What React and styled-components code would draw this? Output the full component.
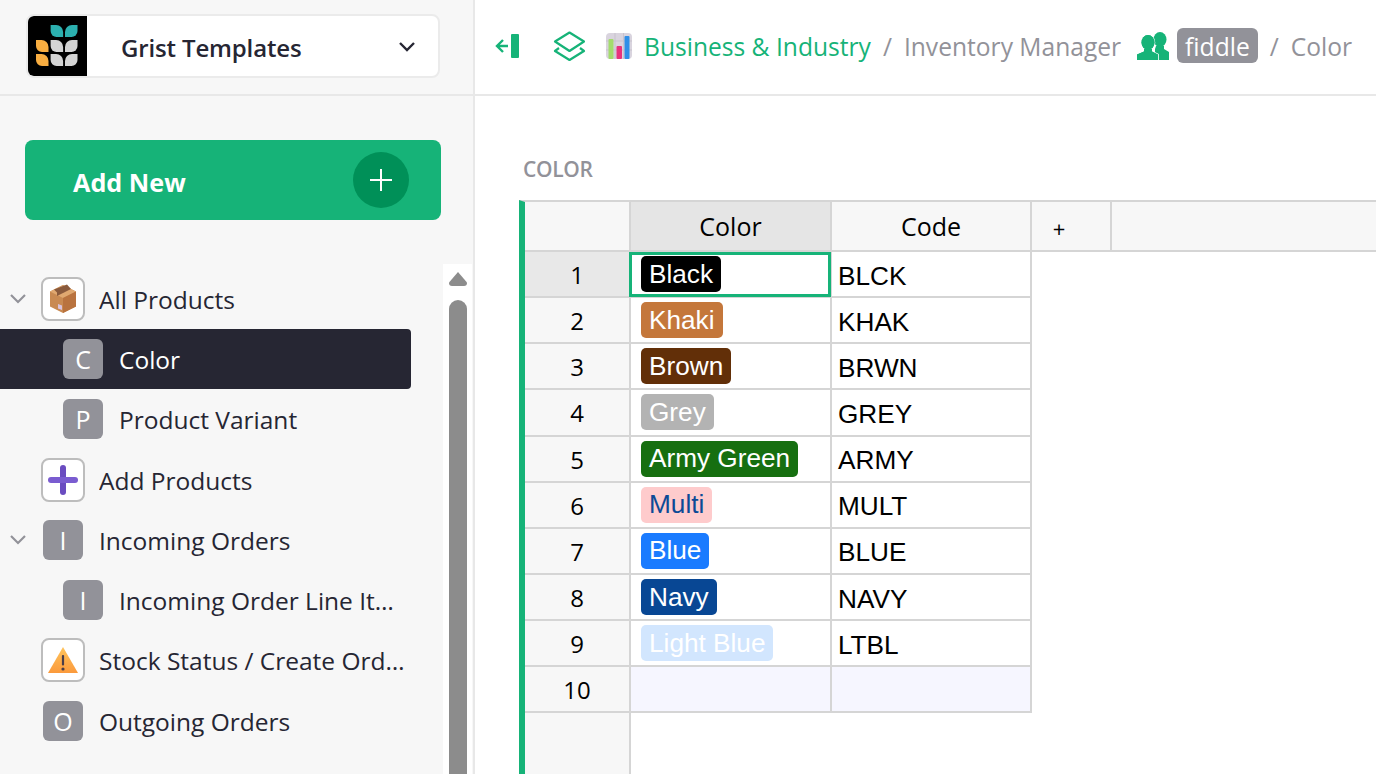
import React from 'react';
import styled, { createGlobalStyle } from 'styled-components';

const GlobalStyle = createGlobalStyle`
  html, body {
    margin: 0;
    padding: 0;
    background: #fff;
    font-family: "Open Sans", "Noto Sans", sans-serif;
  }
  * { box-sizing: border-box; }
`;

const green = '#16b378';

const pages = [
  { name: 'All Products', level: 0, open: true, icon: 'box' },
  { name: 'Color', level: 1, letter: 'C', active: true },
  { name: 'Product Variant', level: 1, letter: 'P' },
  { name: 'Add Products', level: 0, icon: 'plus' },
  { name: 'Incoming Orders', level: 0, open: true, letter: 'I' },
  { name: 'Incoming Order Line Items', level: 1, letter: 'I' },
  { name: 'Stock Status / Create Orders', level: 0, icon: 'warn' },
  { name: 'Outgoing Orders', level: 0, letter: 'O' },
];

const rows = [
  { label: 'Black', code: 'BLCK', bg: '#000000', fg: '#ffffff' },
  { label: 'Khaki', code: 'KHAK', bg: '#c4773b', fg: '#ffffff' },
  { label: 'Brown', code: 'BRWN', bg: '#622f08', fg: '#ffffff' },
  { label: 'Grey', code: 'GREY', bg: '#b3b3b3', fg: '#ffffff' },
  { label: 'Army Green', code: 'ARMY', bg: '#166f10', fg: '#ffffff' },
  { label: 'Multi', code: 'MULT', bg: '#fecbcc', fg: '#0c4a96' },
  { label: 'Blue', code: 'BLUE', bg: '#1a7bff', fg: '#ffffff' },
  { label: 'Navy', code: 'NAVY', bg: '#084794', fg: '#ffffff' },
  { label: 'Light Blue', code: 'LTBL', bg: '#d2e6fe', fg: '#ffffff' },
];

function Leaf({ x, y, color, flip }) {
  const d = flip
    ? `M${x + 12.5} ${y}V${y + 6}a6 6 0 0 1-6 6H${x}V${y + 7}a7 7 0 0 1 7-7z`
    : `M${x} ${y}H${x + 5.5}a7 7 0 0 1 7 7v5H${x + 6}a6 6 0 0 1-6-6z`;
  return <path d={d} fill={color} />;
}

function GristLogo() {
  return (
    <svg width="60" height="60" viewBox="0 0 60 60">
      <Leaf x={23.6} y={9} color="#2cb0af" />
      <Leaf x={38} y={9} color="#2cb0af" flip />
      <Leaf x={9} y={24} color="#f9ae41" />
      <Leaf x={23.6} y={24} color="#d4d4d4" />
      <Leaf x={38} y={24} color="#d4d4d4" flip />
      <Leaf x={9} y={38} color="#f9ae41" />
      <Leaf x={23.6} y={38} color="#d4d4d4" />
      <Leaf x={38} y={38} color="#d4d4d4" flip />
    </svg>
  );
}

function BoxIcon() {
  return (
    <svg width="28" height="30" viewBox="0 0 28 30">
      <path d="M14 1L27 7.5V22.5L14 29L1 22.5V7.5z" fill="#c98a52" />
      <path d="M14 1L27 7.5L14 14L1 7.5z" fill="#e0a870" />
      <path d="M14 14L27 7.5V22.5L14 29z" fill="#b9733f" />
      <path d="M5 5.5L18 0.5L22 5L8 12V8.5z" fill="#8a5a3c" />
      <path d="M9 20l4 1.5V26l-4-1.5z" fill="#d9c3dc" />
    </svg>
  );
}

function PlusIcon() {
  return (
    <svg width="30" height="30" viewBox="0 0 30 30">
      <rect x="12" y="0" width="6" height="30" rx="3" fill="#6a4cc0" />
      <rect x="0" y="12" width="30" height="6" rx="3" fill="#7a5cd0" />
    </svg>
  );
}

function WarnIcon() {
  return (
    <svg width="30" height="26" viewBox="0 0 30 26">
      <defs>
        <linearGradient id="warnFill" x1="0" y1="0" x2="0" y2="1">
          <stop offset="0" stopColor="#ffc45c" />
          <stop offset="1" stopColor="#fb9a3c" />
        </linearGradient>
      </defs>
      <path d="M15 0L30 26H0z" fill="url(#warnFill)" />
      <rect x="13.9" y="8" width="2.2" height="10.5" rx="1" fill="#4a3d48" />
      <circle cx="15" cy="22" r="1.6" fill="#4a3d48" />
    </svg>
  );
}

function ChartIcon() {
  return (
    <svg width="26" height="26" viewBox="0 0 26 26">
      <rect width="26" height="26" rx="4" fill="#d9d4de" />
      <path d="M9 0V26M17.500 0V26M0 8H26M0 17H26" stroke="#c8c3cd" strokeWidth="1" />
      <rect x="2.500" y="6" width="5" height="20" rx="1" fill="#a3dc6c" />
      <rect x="10.500" y="13" width="5.500" height="13" rx="1" fill="#e8327c" />
      <rect x="18.500" y="3" width="5" height="23" rx="1" fill="#2e8fe8" />
    </svg>
  );
}

function PeopleIcon() {
  return (
    <svg width="32" height="28" viewBox="0 0 32 28" fill={green}>
      <ellipse cx="23" cy="7.500" rx="6.500" ry="7.500" />
      <path d="M19 14h8v3l5 3v8H18V17z" />
      <g stroke="#fff" strokeWidth="1.600" paintOrder="stroke">
        <ellipse cx="11" cy="10.500" rx="6.500" ry="7.500" />
        <path d="M7 17h8v2.500l6 3V28H0v-5.500l7-3z" />
      </g>
      <ellipse cx="11" cy="10.500" rx="6.500" ry="7.500" />
      <path d="M7 17h8v2.500l6 3V28H0v-5.500l7-3z" />
    </svg>
  );
}

const customIcons = { box: BoxIcon, plus: PlusIcon, warn: WarnIcon };

const Page = styled.div`
  display: grid;
  grid-template-columns: 475px 1fr;
  width: 100%;
  height: 774px;
  overflow: hidden;
`;

const Sidebar = styled.aside`
  display: flex;
  flex-direction: column;
  background: #f7f7f7;
  border-right: 2px solid #e8e8e8;
  min-height: 0;
`;

const SideHeader = styled.div`
  flex: none;
  height: 96px;
  padding: 14px 33px 0 26px;
  border-bottom: 2px solid #e8e8e8;
`;

const OrgButton = styled.div`
  display: flex;
  align-items: center;
  height: 64px;
  background: #fff;
  border: 2px solid #ebebeb;
  border-radius: 8px;
  overflow: hidden;
`;

const OrgLogo = styled.div`
  flex: none;
  width: 60px;
  height: 60px;
  margin-left: -1px;
  background: #000;
  border-radius: 6px 0 0 6px;

  svg { display: block; }
`;

const OrgName = styled.div`
  flex: 1;
  padding: 2px 0 0 34px;
  font-size: 24px;
  font-weight: 600;
  letter-spacing: -0.15px;
  color: #262633;
`;

const OrgCaret = styled.svg`
  flex: none;
  width: 18px;
  height: 12px;
  margin: 1px 22px 0 0;
`;

const AddNew = styled.div`
  flex: none;
  display: flex;
  align-items: center;
  justify-content: space-between;
  height: 80px;
  margin: 44px 32px 0 25px;
  padding: 0 32px 0 48px;
  background: ${green};
  border-radius: 8px;
  color: #fff;
  font-size: 25.2px;
  font-weight: 700;
`;

const AddLabel = styled.span`
  padding-top: 3px;
`;

const AddCircle = styled.div`
  display: flex;
  align-items: center;
  justify-content: center;
  width: 56px;
  height: 56px;
  border-radius: 50%;
  background: #009058;
`;

const TreeArea = styled.div`
  flex: 1;
  min-height: 0;
  display: grid;
  grid-template-columns: 1fr 29px;
  margin-top: 44px;
  padding-right: 1px;
`;

const Tree = styled.div`
  padding-top: 4.5px;
  min-width: 0;
`;

const TreeRow = styled.div`
  display: flex;
  align-items: center;
  width: 411px;
  height: 60.3px;
  padding-left: ${(props) => (props.$level ? 63 : 10)}px;
  color: ${(props) => (props.$active ? '#fff' : '#262633')};
  background: ${(props) => (props.$active ? '#262633' : 'transparent')};
  border-radius: 0 4px 4px 0;
`;

const Chevron = styled.svg`
  flex: none;
  width: 16px;
  height: 10px;
  margin-right: 15px;
`;

const LetterIcon = styled.div`
  flex: none;
  display: flex;
  align-items: center;
  justify-content: center;
  width: 40px;
  height: 40px;
  margin: ${(props) => (props.$level ? '0 16px 0 0' : '0 16px 0 2px')};
  border-radius: 6px;
  background: #929299;
  color: #fff;
  font-size: 25px;
`;

const EmojiIcon = styled.div`
  flex: none;
  display: flex;
  align-items: center;
  justify-content: center;
  width: 44px;
  height: 44px;
  margin-right: 14px;
  background: #fff;
  border: 2px solid #bdbdbd;
  border-radius: 8px;
`;

const TreeGap = styled.div`
  flex: none;
  width: 31px;
`;

const TreeLabel = styled.div`
  min-width: 0;
  flex: 1;
  padding: 1px 4px 0 0;
  font-size: 24.5px;
  white-space: nowrap;
  overflow: hidden;
  text-overflow: ellipsis;
`;

const ScrollBar = styled.div`
  position: relative;
  background: #fff;
  padding: 36px 5px 0 6px;
`;

const ScrollArrow = styled.div`
  position: absolute;
  top: 8px;
  left: 6px;
  width: 18px;
  height: 14px;
  background: #8c8c8c;
  clip-path: polygon(50% 0, 100% 75%, 100% 100%, 0 100%, 0 75%);
  border-radius: 3px;
`;

const ScrollThumb = styled.div`
  height: 100%;
  background: #8c8c8c;
  border-radius: 9px 9px 0 0;
`;

const Main = styled.main`
  display: flex;
  flex-direction: column;
  min-width: 0;
  background: #fff;
`;

const TopBar = styled.header`
  flex: none;
  display: flex;
  align-items: center;
  height: 96px;
  padding: 0 0 3px 20px;
  border-bottom: 2px solid #e8e8e8;
  font-size: 24.6px;
  white-space: nowrap;
`;

const Crumb = styled.span`
  padding-top: 2px;
  color: ${(props) => (props.$link ? green : '#929299')};
  margin-left: ${(props) => props.$gap || 0}px;
`;

const Slash = styled.span`
  padding-top: 2px;
  color: #929299;
  margin: 0 12px;
`;

const Pill = styled.span`
  display: inline-flex;
  align-items: center;
  height: 35px;
  margin-left: 8px;
  padding: 2px 8px 0;
  border-radius: 6px;
  background: #929299;
  color: #fff;
`;

const IconSlot = styled.span`
  display: inline-flex;
  flex: none;
  margin-left: ${(props) => props.$gap || 0}px;
`;

const Section = styled.section`
  flex: 1;
  min-height: 0;
  display: flex;
  flex-direction: column;
  padding: 59px 0 0 44px;
`;

const SectionTitle = styled.div`
  flex: none;
  height: 45px;
  padding-left: 4px;
  color: #929299;
  font-size: 21px;
  font-weight: 600;
  letter-spacing: -0.3px;
`;

const GridWrap = styled.div`
  flex: 1;
  min-height: 0;
  display: grid;
  grid-template-columns: 106px 1fr;
  grid-template-rows: 1fr;
  border-left: 6px solid ${green};
  border-top: 2px solid #d5d5d5;
`;

const RowNumbers = styled.div`
  background: #f7f7f7;
  border-right: 2px solid #d5d5d5;
`;

const Corner = styled.div`
  height: 50px;
  border-bottom: 2px solid #d5d5d5;
`;

const RowNumber = styled.div`
  display: flex;
  align-items: center;
  justify-content: center;
  height: 46.15px;
  border-bottom: 2px solid #d5d5d5;
  padding-top: 1px;
  background: ${(props) => (props.$active ? '#e8e8e8' : '#f7f7f7')};
  color: #000;
  font-size: 24px;
`;

const Cells = styled.div`
  min-width: 0;
`;

const HeaderRow = styled.div`
  display: flex;
  height: 50px;
  border-bottom: 2px solid #d5d5d5;
  background: #f7f7f7;
`;

const HeaderCell = styled.div`
  flex: none;
  display: flex;
  align-items: center;
  justify-content: center;
  width: ${(props) => props.$width}px;
  height: 48px;
  padding: ${(props) => (props.$narrow ? '4px 24px 0 0' : '0')};
  border-right: 2px solid #d5d5d5;
  background: ${(props) => (props.$active ? '#e5e5e5' : '#f7f7f7')};
  color: #000;
  font-size: ${(props) => (props.$narrow ? 22 : 25)}px;
`;

const DataRow = styled.div`
  display: flex;
  width: 401px;
  height: 46.15px;
  border-bottom: 2px solid #d5d5d5;
  background: ${(props) => (props.$blank ? '#f6f6ff' : '#fff')};
`;

const DataCell = styled.div`
  position: relative;
  flex: none;
  width: ${(props) => props.$width}px;
  display: flex;
  align-items: center;
  padding-left: ${(props) => props.$pad || 0}px;
  border-right: 2px solid #d5d5d5;
  font-family: "Liberation Sans", Arial, sans-serif;
  font-size: 26.2px;
  color: #000;
`;

const CodeText = styled.span`
  padding-top: 4px;
`;

const Chip = styled.span`
  display: inline-flex;
  align-items: center;
  height: 36px;
  margin-top: 0;
  padding: 0 8px;
  border-radius: 5px;
  background: ${(props) => props.$bg};
  color: ${(props) => props.$fg};
  white-space: nowrap;
`;

const Cursor = styled.div`
  position: absolute;
  top: 0;
  left: -2px;
  right: -1px;
  bottom: -1px;
  border: 3px solid ${green};
`;

function Breadcrumbs() {
  return (
    <TopBar>
      <IconSlot>
        <svg width="25" height="26" viewBox="0 0 25 26" fill="none">
          <rect x="16" y="1" width="8" height="24" rx="1" fill={green} />
          <path d="M13 13H2M8 7l-6 6 6 6" stroke={green} strokeWidth="2.4" />
        </svg>
      </IconSlot>
      <IconSlot $gap={33}>
        <svg width="33" height="30" viewBox="0 0 33 30" fill="none" stroke={green} strokeWidth="2.2">
          <path d="M16.500 1.500L31 10.500L16.500 20L2 10.500z" strokeLinejoin="round" />
          <path d="M6 17L2 20L16.500 29L31 20L27 17" strokeLinejoin="round" />
        </svg>
      </IconSlot>
      <IconSlot $gap={20}><ChartIcon /></IconSlot>
      <Crumb $link $gap={12}>Business &amp; Industry</Crumb>
      <Slash>/</Slash>
      <Crumb>Inventory Manager</Crumb>
      <IconSlot $gap={16}><PeopleIcon /></IconSlot>
      <Pill>fiddle</Pill>
      <Slash>/</Slash>
      <Crumb>Color</Crumb>
    </TopBar>
  );
}

function TreeItem({ page }) {
  const Custom = customIcons[page.icon];
  return (
    <TreeRow $level={page.level} $active={page.active}>
      {page.level === 0 && (
        page.open ? (
          <Chevron viewBox="0 0 16 10" fill="none" stroke="#929299" strokeWidth="2.2">
            <path d="M1 1l7 7 7-7" />
          </Chevron>
        ) : <TreeGap />
      )}
      {Custom ? (
        <EmojiIcon><Custom /></EmojiIcon>
      ) : (
        <LetterIcon $level={page.level}>{page.letter}</LetterIcon>
      )}
      <TreeLabel>{page.name}</TreeLabel>
    </TreeRow>
  );
}

function RecordGrid() {
  return (
    <GridWrap>
      <RowNumbers>
        <Corner />
        {rows.map((row, i) => (
          <RowNumber key={row.code} $active={i === 0}>{i + 1}</RowNumber>
        ))}
        <RowNumber>10</RowNumber>
      </RowNumbers>
      <Cells>
        <HeaderRow>
          <HeaderCell $width={201} $active>Color</HeaderCell>
          <HeaderCell $width={200}>Code</HeaderCell>
          <HeaderCell $width={80} $narrow>+</HeaderCell>
        </HeaderRow>
        {rows.map((row, i) => (
          <DataRow key={row.code}>
            <DataCell $width={201} $pad={10}>
              <Chip $bg={row.bg} $fg={row.fg}>{row.label}</Chip>
              {i === 0 && <Cursor />}
            </DataCell>
            <DataCell $width={200} $pad={6}>
              <CodeText>{row.code}</CodeText>
            </DataCell>
          </DataRow>
        ))}
        <DataRow $blank>
          <DataCell $width={201} />
          <DataCell $width={200} />
        </DataRow>
      </Cells>
    </GridWrap>
  );
}

export default function App() {
  return (
    <>
      <GlobalStyle />
      <Page>
        <Sidebar>
          <SideHeader>
            <OrgButton>
              <OrgLogo><GristLogo /></OrgLogo>
              <OrgName>Grist Templates</OrgName>
              <OrgCaret viewBox="0 0 18 12" fill="none" stroke="#262633" strokeWidth="2.4">
                <path d="M2 2l7 7 7-7" />
              </OrgCaret>
            </OrgButton>
          </SideHeader>
          <AddNew>
            <AddLabel>Add New</AddLabel>
            <AddCircle>
              <svg width="24" height="24" viewBox="0 0 24 24" stroke="#fff" strokeWidth="2">
                <path d="M12 1V23M1 12H23" />
              </svg>
            </AddCircle>
          </AddNew>
          <TreeArea>
            <Tree>
              {pages.map((page) => <TreeItem key={page.name} page={page} />)}
            </Tree>
            <ScrollBar>
              <ScrollArrow />
              <ScrollThumb />
            </ScrollBar>
          </TreeArea>
        </Sidebar>
        <Main>
          <Breadcrumbs />
          <Section>
            <SectionTitle>COLOR</SectionTitle>
            <RecordGrid />
          </Section>
        </Main>
      </Page>
    </>
  );
}
